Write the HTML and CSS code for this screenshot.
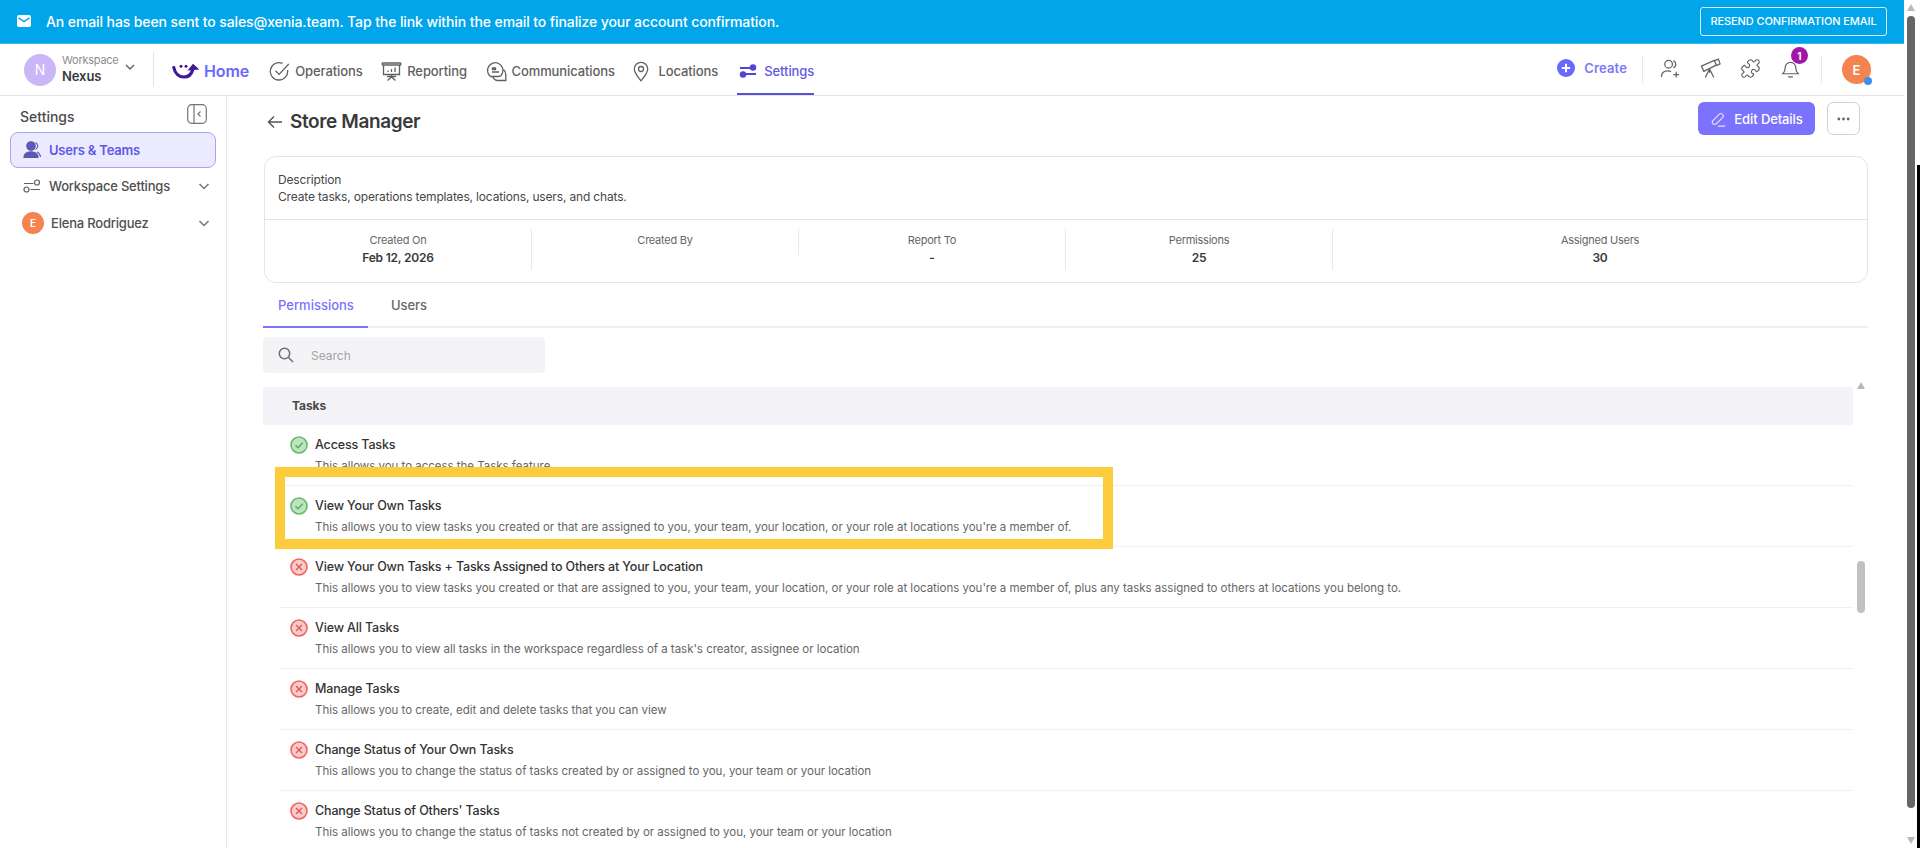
FILE: index.html
```html
<!DOCTYPE html>
<html lang="en">
<head>
<meta charset="utf-8">
<title>Store Manager</title>
<link rel="stylesheet" href="styles.css">
</head>
<body>
<div class="page">
  <div class="app">
    <header class="banner">
      <div class="banner-msg">
        <svg class="banner-icon" viewBox="0 0 14 12"><rect width="14" height="12" rx="2" fill="#fff"/><path d="M1.5 2.8 7 6.6l5.5-3.8" fill="none" stroke="#00a5ea" stroke-width="1.4"/></svg>
        <span>An email has been sent to sales@xenia.team. Tap the link within the email to finalize your account confirmation.</span>
      </div>
      <button class="resend">RESEND CONFIRMATION EMAIL</button>
    </header>

    <nav class="nav">
      <div class="workspace">
        <div class="ws-avatar">N</div>
        <div class="ws-text"><span class="ws-label">Workspace</span><span class="ws-name">Nexus</span></div>
        <svg class="chev ws-chev" viewBox="0 0 12 12"><path d="M2 4l4 4 4-4"/></svg>
      </div>
      <div class="nav-items">
        <a class="nav-item home">
          <svg class="logo" viewBox="0 0 28 16"><path d="M1.8 4.5C3 11 7.5 14 12 14c4.5 0 7.5-3 8.6-7" fill="none" stroke="#3f1a96" stroke-width="3.2" stroke-linecap="round"/><path d="M15.6 7.4 21 .8l6.4 5.8z" fill="#3f1a96"/><circle cx="9" cy="3.2" r="1.5" fill="#3f1a96"/><circle cx="14" cy="3.2" r="1.5" fill="#3f1a96"/></svg>
          <span>Home</span>
        </a>
        <a class="nav-item">
          <svg class="nav-icon" viewBox="0 0 21 21"><path d="M18.6 9a8.7 8.7 0 1 1-5-6.6"/><path d="M6.5 9.8l3.6 3.6L19.8 3"/></svg>
          <span>Operations</span>
        </a>
        <a class="nav-item">
          <svg class="nav-icon" viewBox="0 0 21 21"><rect x="1.2" y="2" width="18.6" height="2" rx=".6"/><path d="M2.5 4v9.5h16V4"/><path d="M10.5 13.5v3M10.5 16l-4 3.5M10.5 16l4 3.5M6 15.5h9"/><path d="M7 11V9.5M10.5 11V8M14 11V6.5"/></svg>
          <span>Reporting</span>
        </a>
        <a class="nav-item">
          <svg class="nav-icon" viewBox="0 0 21 21"><path d="M4.5 15.5A7.7 7.7 0 1 1 16.5 12c-.6 2-2 3.2-3.5 3.5H4.5z"/><path d="M6 11h7M6.5 8.5V7h3v1.5z"/><path d="M17.5 8.5c1.7 1.5 2.3 3 2.3 5v6h-8c-2.5 0-4-1-5-4"/></svg>
          <span>Communications</span>
        </a>
        <a class="nav-item locations">
          <svg class="nav-icon pin" viewBox="0 0 16 21"><path d="M8 19.8C4.5 15.5 1.3 12 1.3 8a6.7 6.7 0 0 1 13.4 0c0 4-3.2 7.5-6.7 11.8z"/><circle cx="8" cy="8" r="2.5"/></svg>
          <span>Locations</span>
        </a>
        <a class="nav-item active">
          <svg class="nav-icon sliders" viewBox="0 0 18 18"><path d="M1 6h10M7 12h10"/><circle cx="14" cy="5.5" r="3.2"/><circle cx="4" cy="12.5" r="3.2"/></svg>
          <span>Settings</span>
        </a>
      </div>
      <div class="nav-right">
        <a class="create">
          <svg class="create-icon" viewBox="0 0 18 18"><circle cx="9" cy="9" r="9" fill="#6868fe"/><path d="M9 4.8v8.4M4.8 9h8.4" stroke="#fff" stroke-width="2"/></svg>
          <span>Create</span>
        </a>
        <span class="nav-divider"></span>
        <div class="tools">
          <svg class="tool" viewBox="0 0 22 22"><circle cx="9" cy="6.5" r="4"/><path d="M14 2.8c1.8.8 2.5 2.2 2.5 3.7s-.7 3-2.500 3.7M1.5 20c0-4 2.5-6.5 6.500-6.500 1.500 0 2.500.2 3.500.8M17 14.500v6M14 17.500h6"/></svg>
          <svg class="tool" viewBox="0 0 22 22"><path d="M1.500 8.500 15 2.500l2 5-13 6.500z"/><path d="M15 3l4.300-1.800 1.700 5-4 1.800"/><path d="M10 11.500l-4.500 9M10 11.500l4.500 9M10 11.500v4"/></svg>
          <svg class="tool" viewBox="0 0 24 24"><path d="M19.439 7.850c-.049.322.059.648.289.878l1.568 1.568c.47.47.706 1.087.706 1.704s-.235 1.233-.706 1.704l-1.611 1.611a.98.98 0 0 1-.837.276c-.47-.07-.802-.48-.968-.925a2.501 2.501 0 1 0-3.214 3.214c.446.166.855.497.925.968a.979.979 0 0 1-.276.837l-1.610 1.610a2.404 2.404 0 0 1-1.705.707 2.402 2.402 0 0 1-1.704-.706l-1.568-1.568a1.026 1.026 0 0 0-.877-.290c-.493.074-.84.504-1.020.968a2.500 2.500 0 1 1-3.237-3.237c.464-.18.894-.527.967-1.020a1.026 1.026 0 0 0-.289-.877l-1.568-1.568A2.402 2.402 0 0 1 1.998 12c0-.617.236-1.234.706-1.704L4.230 8.770c.24-.24.581-.353.917-.303.515.077.877.528 1.073 1.010a2.500 2.500 0 1 0 3.259-3.259c-.482-.196-.933-.558-1.010-1.073-.05-.336.062-.676.303-.917l1.525-1.525A2.402 2.402 0 0 1 12 1.998c.617 0 1.234.236 1.704.706l1.568 1.568c.23.23.556.338.877.290.493-.074.84-.504 1.020-.968a2.500 2.500 0 1 1 3.237 3.237c-.464.18-.894.527-.967 1.020Z"/></svg>
          <div class="bell">
            <svg class="tool" viewBox="0 0 22 22"><path d="M3 16.500c1.500-1.500 2.500-3 2.500-6.500a5.500 5.500 0 0 1 11 0c0 3.500 1 5 2.500 6.500z"/><path d="M8.500 19.800h5"/></svg>
            <span class="badge">1</span>
          </div>
        </div>
        <span class="nav-divider"></span>
        <div class="user-avatar">E<span class="status-dot"></span></div>
      </div>
    </nav>

    <div class="content">
      <aside class="sidebar">
        <div class="side-head">
          <span>Settings</span>
          <svg class="collapse" viewBox="0 0 20 20"><rect x=".7" y=".7" width="18.6" height="18.6" rx="4"/><path d="M7 .7v18.6M13.5 7.500 11 10l2.500 2.500"/></svg>
        </div>
        <a class="side-item selected">
          <svg class="side-icon" viewBox="0 0 18 18"><circle cx="8" cy="5" r="4.2" fill="#5a52e0"/><path d="M1 16.500c0-3.600 3-5.700 7-5.700s7 2.100 7 5.700z" fill="#5a52e0"/><path d="M12.500 1.500c1.600.8 2.300 2 2.300 3.500s-.7 2.700-2.300 3.500M14 11c2 .8 3.200 2.500 3.500 5" fill="none" stroke="#5a52e0" stroke-width="1.1"/></svg>
          <span>Users &amp; Teams</span>
        </a>
        <a class="side-item spaced">
          <svg class="side-icon" viewBox="0 0 18 18"><path d="M1 6.500h9.500M7.500 12.500H17"/><circle cx="14" cy="5.500" r="2.500"/><circle cx="3.500" cy="12.500" r="2.500"/></svg>
          <span>Workspace Settings</span>
          <svg class="chev side-chev" viewBox="0 0 12 12"><path d="M1.500 4l4.500 4.500L10.500 4"/></svg>
        </a>
        <a class="side-item">
          <span class="side-avatar">E</span>
          <span>Elena Rodriguez</span>
          <svg class="chev side-chev" viewBox="0 0 12 12"><path d="M1.500 4l4.500 4.500L10.500 4"/></svg>
        </a>
      </aside>

      <main class="main">
        <div class="page-head">
          <div class="title-wrap">
            <svg class="back" viewBox="0 0 16 14"><path d="M15 7H1.500M7 1.500 1.500 7 7 12.500"/></svg>
            <h1>Store Manager</h1>
          </div>
          <div class="head-actions">
            <button class="edit-btn">
              <svg class="edit-icon" viewBox="0 0 18 18"><path d="M3.500 14.500c-1.500-1.500-1-3 0-4l6.800-6.800c1.200-1.200 3-.8 3.800 0s1.200 2.600 0 3.800L8 13.500c-1.500 1.500-3.200 2.300-4.500 1zM9 17h8"/></svg>
              Edit Details
            </button>
            <button class="more-btn">
              <svg class="more-icon" viewBox="0 0 14 4"><circle cx="2" cy="2" r="1.500"/><circle cx="7" cy="2" r="1.500"/><circle cx="12" cy="2" r="1.500"/></svg>
            </button>
          </div>
        </div>

        <section class="card">
          <div class="card-desc">
            <div>Description</div>
            <div>Create tasks, operations templates, locations, users, and chats.</div>
          </div>
          <div class="stats">
            <div class="stat"><span class="stat-label">Created On</span><span class="stat-value">Feb 12, 2026</span></div>
            <div class="stat"><span class="stat-label">Created By</span></div>
            <div class="stat"><span class="stat-label">Report To</span><span class="stat-value">-</span></div>
            <div class="stat"><span class="stat-label">Permissions</span><span class="stat-value">25</span></div>
            <div class="stat last"><span class="stat-label">Assigned Users</span><span class="stat-value">30</span></div>
          </div>
        </section>

        <div class="tabs">
          <a class="tab current">Permissions</a>
          <a class="tab">Users</a>
        </div>

        <div class="search">
          <svg class="search-icon" viewBox="0 0 16 16"><circle cx="6.500" cy="6.500" r="5.200"/><path d="M10.500 10.500 15 15"/></svg>
          <span>Search</span>
        </div>

        <div class="list">
          <div class="rows">
            <div class="group-head">Tasks</div>
            <div class="row">
              <svg class="st" viewBox="0 0 18 18"><circle class="ok" cx="9" cy="9" r="8"/><path class="ok-mark" d="M5.500 9.200l2.500 2.500 4.800-5"/></svg>
              <div><div class="row-title">Access Tasks</div><div class="row-desc">This allows you to access the Tasks feature</div></div>
            </div>
            <div class="row">
              <svg class="st" viewBox="0 0 18 18"><circle class="ok" cx="9" cy="9" r="8"/><path class="ok-mark" d="M5.500 9.200l2.500 2.500 4.800-5"/></svg>
              <div><div class="row-title">View Your Own Tasks</div><div class="row-desc">This allows you to view tasks you created or that are assigned to you, your team, your location, or your role at locations you're a member of.</div></div>
            </div>
            <div class="row">
              <svg class="st" viewBox="0 0 18 18"><circle class="no" cx="9" cy="9" r="8"/><path class="no-mark" d="M6 6l6 6M12 6l-6 6"/></svg>
              <div><div class="row-title">View Your Own Tasks + Tasks Assigned to Others at Your Location</div><div class="row-desc">This allows you to view tasks you created or that are assigned to you, your team, your location, or your role at locations you're a member of, plus any tasks assigned to others at locations you belong to.</div></div>
            </div>
            <div class="row">
              <svg class="st" viewBox="0 0 18 18"><circle class="no" cx="9" cy="9" r="8"/><path class="no-mark" d="M6 6l6 6M12 6l-6 6"/></svg>
              <div><div class="row-title">View All Tasks</div><div class="row-desc">This allows you to view all tasks in the workspace regardless of a task's creator, assignee or location</div></div>
            </div>
            <div class="row">
              <svg class="st" viewBox="0 0 18 18"><circle class="no" cx="9" cy="9" r="8"/><path class="no-mark" d="M6 6l6 6M12 6l-6 6"/></svg>
              <div><div class="row-title">Manage Tasks</div><div class="row-desc">This allows you to create, edit and delete tasks that you can view</div></div>
            </div>
            <div class="row">
              <svg class="st" viewBox="0 0 18 18"><circle class="no" cx="9" cy="9" r="8"/><path class="no-mark" d="M6 6l6 6M12 6l-6 6"/></svg>
              <div><div class="row-title">Change Status of Your Own Tasks</div><div class="row-desc">This allows you to change the status of tasks created by or assigned to you, your team or your location</div></div>
            </div>
            <div class="row">
              <svg class="st" viewBox="0 0 18 18"><circle class="no" cx="9" cy="9" r="8"/><path class="no-mark" d="M6 6l6 6M12 6l-6 6"/></svg>
              <div><div class="row-title">Change Status of Others' Tasks</div><div class="row-desc">This allows you to change the status of tasks not created by or assigned to you, your team or your location</div></div>
            </div>
          </div>
          <div class="inner-scroll"><span class="arrow-up"></span><span class="inner-thumb"></span></div>
        </div>
      </main>
    </div>
  </div>

  <div class="page-scroll">
    <span class="arrow-up"></span>
    <span class="page-thumb"></span>
    <span class="arrow-down"></span>
  </div>
  <div class="edge"></div>
  <div class="highlight"></div>
</div>
</body>
</html>
```

FILE: styles.css
```css
* { box-sizing: border-box; }
html, body { margin: 0; height: 100%; overflow: hidden; background: #fff; }
body { font-family: Inter, "Noto Sans", sans-serif; color: #333; }
a { color: inherit; text-decoration: none; }
button { font-family: inherit; }
svg { display: block; flex: none; }

.page { display: flex; height: 848px; position: relative; overflow: hidden; }
.app { width: 1904px; display: flex; flex-direction: column; }

/* banner */
.banner { height: 44px; flex: none; background: #00a5ea; display: flex; align-items: center; justify-content: space-between; padding: 0 17px 1px 17px; color: #fff; border-bottom: 1px solid #35b9ee; }
.banner-msg { display: flex; align-items: center; gap: 15px; font-size: 14px; font-weight: 500; letter-spacing: -.1px; }
.banner-icon { width: 14px; height: 12px; }
.resend { width: 187px; height: 29px; border: 1px solid #d7f1fc; border-radius: 3px; background: transparent; color: #fff; font-size: 11px; font-weight: 500; letter-spacing: -.1px; padding: 0; }

/* top nav */
.nav { height: 52px; flex: none; display: flex; align-items: stretch; border-bottom: 1px solid #e4e4e7; padding-left: 24px; padding-right: 33px; }
.workspace { display: flex; align-items: center; width: 129px; flex: none; position: relative; }
.workspace::after { content: ""; position: absolute; left: 129px; top: 8px; bottom: 8px; width: 1px; background: #e4e4e7; }
.ws-avatar { width: 32px; height: 32px; border-radius: 50%; background: #cbb6f8; color: #fff; font-size: 14px; display: flex; align-items: center; justify-content: center; flex: none; }
.ws-text { display: flex; flex-direction: column; margin-left: 6px; line-height: 16px; margin-top: -4px; }
.ws-label { font-size: 11px; color: #8c8c8c; letter-spacing: -.25px; }
.ws-name { font-size: 13px; font-weight: 600; color: #3b3b3b; letter-spacing: -.1px; }
.chev { fill: none; stroke: #666; stroke-width: 1.5; }
.ws-chev { width: 12px; height: 12px; margin-left: 5px; margin-top: -6px; }

.nav-items { display: flex; align-items: stretch; margin-left: 19px; gap: 18.6px; }
.nav-item { display: flex; align-items: center; gap: 5px; font-size: 13px; font-weight: 500; color: #616161; height: 51px; padding-top: 3px; letter-spacing: -.1px; }
.nav-icon { width: 21px; height: 21px; fill: none; stroke: #616161; stroke-width: 1.3; }
.nav-icon.pin { width: 16px; }
.nav-icon.sliders { width: 18px; height: 18px; stroke: #4f46d8; stroke-width: 2; }
.nav-icon.sliders circle { fill: #4f46d8; stroke: none; }
.nav-item.home { font-size: 16px; font-weight: 600; color: #6868fe; gap: 4px; margin-right: 1.5px; }
.nav-item.locations { gap: 9px; }
.logo { width: 28px; height: 16px; }
.nav-item.active { color: #5f58e6; border-bottom: 2px solid #5a52d5; padding-top: 5px; padding-left: 2px; gap: 7.5px; }

.nav-right { margin-left: auto; display: flex; align-items: center; }
.create { display: flex; align-items: center; gap: 9px; color: #7c78fb; font-size: 13px; font-weight: 600; margin-right: 15px; margin-top: -3px; letter-spacing: .15px; }
.create-icon { width: 18px; height: 18px; }
.nav-divider { width: 1px; height: 28px; background: #e8e8ea; margin-top: -2px; }
.tools { display: flex; align-items: center; gap: 19px; padding: 0 20px 0 17px; margin-top: -2px; }
.tool { width: 21px; height: 21px; fill: none; stroke: #616161; stroke-width: 1.3; }
.bell { position: relative; }
.badge { position: absolute; top: -11px; left: 11px; width: 17px; height: 17px; border-radius: 50%; background: #a217a8; color: #fff; font-size: 10px; font-weight: 700; display: flex; align-items: center; justify-content: center; }
.user-avatar { position: relative; width: 29px; height: 29px; border-radius: 50%; background: #f4844f; color: #fff; font-size: 13px; font-weight: 600; display: flex; align-items: center; justify-content: center; margin-left: 20px; }
.status-dot { position: absolute; right: -1px; bottom: -1px; width: 8px; height: 8px; border-radius: 50%; background: #3f8ff0; }

/* layout below the nav */
.content { flex: 1; display: flex; min-height: 0; }
.sidebar { width: 227px; flex: none; border-right: 1px solid #e8e8ea; padding: 0 10px; }
.side-head { height: 36px; display: flex; align-items: center; justify-content: space-between; padding: 5px 9px 0 10px; font-size: 14px; font-weight: 500; color: #4a4a4a; }
.collapse { width: 20px; height: 20px; margin-top: -5px; fill: none; stroke: #757575; stroke-width: 1.2; }
.side-item { height: 36px; display: flex; align-items: center; font-size: 13px; font-weight: 500; color: #4f4f4f; padding: 0 6px 0 13px; letter-spacing: -.2px; }
.side-item.spaced { margin-bottom: 1px; }
.side-item.selected { background: #ebeaff; border: 1px solid #a9a4f3; border-radius: 8px; color: #5f58e6; font-weight: 600; padding-left: 12px; }
.side-icon { width: 18px; height: 18px; margin-right: 8px; fill: none; stroke: #616161; stroke-width: 1.2; }
.side-avatar { width: 22px; height: 22px; border-radius: 50%; background: #f4844f; color: #fff; font-size: 10px; font-weight: 600; display: flex; align-items: center; justify-content: center; margin-left: -1px; margin-right: 7px; flex: none; }
.side-chev { width: 12px; height: 12px; margin-left: auto; stroke: #757575; }

.main { flex: 1; min-width: 0; padding: 6px 36px 0 36px; display: flex; flex-direction: column; overflow: hidden; }
.page-head { height: 54px; flex: none; display: flex; justify-content: space-between; align-items: flex-start; }
.title-wrap { display: flex; align-items: center; gap: 7px; margin-top: 6px; margin-left: 4px; }
.back { width: 16px; height: 14px; fill: none; stroke: #555; stroke-width: 1.4; }
h1 { margin: 0; font-size: 19px; font-weight: 600; line-height: 28px; color: #3a3a3a; letter-spacing: -.38px; }
.head-actions { display: flex; gap: 12px; margin-right: 8px; }
.edit-btn { width: 117px; height: 33px; border: 0; border-radius: 6px; background: #7b73fd; color: #fff; font-size: 13px; font-weight: 500; display: flex; align-items: center; justify-content: center; gap: 8px; padding: 0; letter-spacing: -.1px; }
.edit-icon { width: 16px; height: 16px; fill: none; stroke: #e6e4ff; stroke-width: 1.2; }
.more-btn { width: 33px; height: 33px; border: 1px solid #d0d0d4; border-radius: 6px; background: #fff; display: flex; align-items: center; justify-content: center; padding: 0; }
.more-icon { width: 13px; height: 4px; fill: #666; }

.card { flex: none; margin-left: 1px; height: 127px; border: 1px solid #e4e4e7; border-radius: 12px; }
.card-desc { height: 63px; border-bottom: 1px solid #e4e4e7; padding: 14px 13px 0; font-size: 12px; line-height: 17px; color: #474747; letter-spacing: -.16px; }
.stats { display: flex; align-items: flex-start; padding-top: 9px; }
.stat { width: 267px; flex: none; display: flex; flex-direction: column; align-items: center; border-right: 1px solid #e8e8ea; padding-top: 3px; padding-bottom: 2px; min-height: 26px; }
.stat.last { flex: 1; border-right: 0; }
.stat-label { font-size: 11px; line-height: 16px; color: #666; letter-spacing: -.25px; }
.stat-value { font-size: 12px; line-height: 20px; font-weight: 600; color: #3a3a3a; letter-spacing: -.2px; }

.tabs { flex: none; height: 45px; display: flex; border-bottom: 2px solid #eeeef0; }
.tab { height: 45px; padding: 0 14px; display: flex; align-items: center; font-size: 13px; font-weight: 500; color: #666; border-bottom: 2px solid transparent; margin-right: 9px; letter-spacing: -.08px; }
.tab.current { color: #7b73fd; border-bottom-color: #7b73fd; width: 105px; padding: 0 15px; letter-spacing: 0; }

.search { flex: none; margin-top: 9px; width: 282px; height: 36px; background: #f4f4f7; border-radius: 4px; display: flex; align-items: center; gap: 17px; padding-left: 15px; font-size: 12px; color: #a3a3a3; }
.search-icon { width: 16px; height: 16px; fill: none; stroke: #6f6f6f; stroke-width: 1.5; }

.list { flex: 1; margin-top: 9px; display: flex; min-height: 0; overflow: hidden; }
.rows { width: 1590px; flex: none; padding-top: 5px; }
.group-head { height: 38px; background: #f4f4f8; display: flex; align-items: center; padding: 0 0 2px 29px; font-size: 12px; font-weight: 700; color: #474747; letter-spacing: -.1px; }
.row { height: 61px; margin-left: 17px; padding: 11px 0 0 10px; display: flex; gap: 7px; border-bottom: 1px solid #f1f1f3; }
.st { width: 18px; height: 18px; }
.ok { fill: #bfe4c1; stroke: #66bb6a; stroke-width: 1.6; }
.ok-mark { fill: none; stroke: #4caf50; stroke-width: 1.3; }
.no { fill: #f9cccc; stroke: #ef6461; stroke-width: 1.6; }
.no-mark { fill: none; stroke: #e8504d; stroke-width: 1.3; }
.row-title { font-size: 12.5px; line-height: 18px; font-weight: 500; color: #333; letter-spacing: -.15px; }
.row-desc { font-size: 11.5px; line-height: 16px; margin-top: 4px; color: #666; letter-spacing: -.02px; }

.inner-scroll { width: 15px; flex: none; padding-left: 4px; display: flex; flex-direction: column; }
.inner-thumb { width: 8px; height: 52px; border-radius: 4px; background: #c1c1c1; margin-top: 172px; }

.arrow-up, .arrow-down { width: 0; height: 0; border-left: 4.5px solid transparent; border-right: 4.5px solid transparent; }
.arrow-up { border-bottom: 7px solid #b9b9b9; }
.arrow-down { border-top: 7px solid #b9b9b9; }

.page-scroll { width: 16px; flex: none; display: flex; flex-direction: column; padding: 4px 0 4px 3px; }
.page-thumb { width: 8px; height: 793px; border-radius: 4px; background: #666; margin-top: 5px; }
.page-scroll .arrow-down { margin-top: 29px; }

.edge { position: absolute; right: 0; top: 165px; bottom: 0; width: 3px; background: #000; }
.highlight { position: absolute; left: 275px; top: 467px; width: 838px; height: 82px; border: 10px solid #fdcc3d; }
```
